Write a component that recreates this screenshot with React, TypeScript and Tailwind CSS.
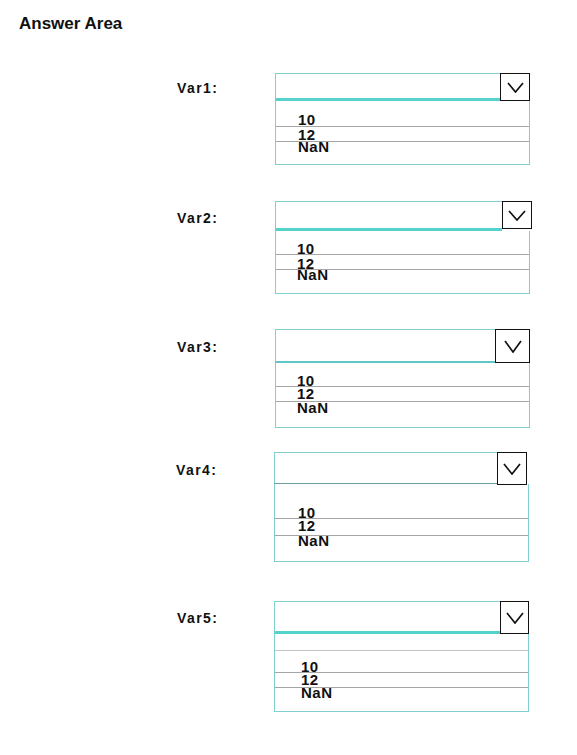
import React from "react";

type RowSpec = { h: string; pt: string; text?: string; line?: string };

type BlockSpec = {
  label: string;
  mt: string;
  labelBox: string;
  left: string;
  arrow: string;
  chev: { w: number; h: number };
  rows: RowSpec[];
  pl: string;
};

const blocks: BlockSpec[] = [
  {
    label: "Var1:",
    mt: "mt-[43px]",
    labelBox: "ml-[177px] w-[98px] pt-[10px]",
    left: "h-[28px] border-t border-l border-b-[3px] border-[#7fd0d0] border-b-[#55d2cc]",
    arrow: "w-[30px] h-[28px]",
    chev: { w: 17, h: 11 },
    pl: "pl-[22px]",
    rows: [
      { h: "h-[26px]", pt: "pt-[14px]", text: "10", line: "border-b border-[#a5a5a5]" },
      { h: "h-[15px]", pt: "pt-[3px]", text: "12", line: "border-b border-[#a5a5a5]" },
      { h: "h-[22px]", pt: "pt-0", text: "NaN" },
    ],
  },
  {
    label: "Var2:",
    mt: "mt-[36px]",
    labelBox: "ml-[177px] w-[98px] pt-[12px]",
    left: "h-[30px] border-t border-l border-b-[3px] border-[#7fd0d0] border-b-[#55d2cc]",
    arrow: "w-[30px] h-[28px] -mr-[2px]",
    chev: { w: 18, h: 11 },
    pl: "pl-[21px]",
    rows: [
      { h: "h-[24px]", pt: "pt-[13px]", text: "10", line: "border-b border-[#a5a5a5]" },
      { h: "h-[15px]", pt: "pt-[4px]", text: "12", line: "border-b border-[#a5a5a5]" },
      { h: "h-[23px]", pt: "pt-0", text: "NaN" },
    ],
  },
  {
    label: "Var3:",
    mt: "mt-[35px]",
    labelBox: "ml-[177px] w-[98px] pt-[13px]",
    left: "h-[34px] border-t border-l border-b-2 border-[#7fd0d0] border-b-[#62c6c6]",
    arrow: "w-[35px] h-[34px]",
    chev: { w: 18, h: 13 },
    pl: "pl-[21px]",
    rows: [
      { h: "h-[24px]", pt: "pt-[13px]", text: "10", line: "border-b border-[#a5a5a5]" },
      { h: "h-[15px]", pt: "pt-[2px]", text: "12", line: "border-b border-[#a5a5a5]" },
      { h: "h-[25px]", pt: "pt-[1px]", text: "NaN" },
    ],
  },
  {
    label: "Var4:",
    mt: "mt-[24px]",
    labelBox: "ml-[176px] w-[98px] pt-[13px]",
    left: "h-[32px] border-t border-l border-b border-[#7fd0d0] border-b-[#6f9e9e]",
    arrow: "w-[30px] h-[33px] mr-[2px] -mb-[1px]",
    chev: { w: 18, h: 12 },
    pl: "pl-[23px]",
    rows: [
      { h: "h-[35px]", pt: "pt-[24px]", text: "10", line: "border-b border-[#a5a5a5]" },
      { h: "h-[17px]", pt: "pt-[2px]", text: "12", line: "border-b border-[#a5a5a5]" },
      { h: "h-[25px]", pt: "pt-0", text: "NaN" },
    ],
  },
  {
    label: "Var5:",
    mt: "mt-[39px]",
    labelBox: "ml-[177px] w-[97px] pt-[12px]",
    left: "h-[33px] border-t border-l border-b-[3px] border-[#7fd0d0] border-b-[#55d2cc]",
    arrow: "w-[29px] h-[33px]",
    chev: { w: 18, h: 12 },
    pl: "pl-[26px]",
    rows: [
      { h: "h-[17px]", pt: "pt-0", line: "border-b border-[#c4c4c4]" },
      { h: "h-[22px]", pt: "pt-[11px]", text: "10", line: "border-b border-[#a5a5a5]" },
      { h: "h-[15px]", pt: "pt-[2px]", text: "12", line: "border-b border-[#a5a5a5]" },
      { h: "h-[23px]", pt: "pt-0", text: "NaN" },
    ],
  },
];

function Chevron({ w, h }: { w: number; h: number }) {
  return (
    <svg width={w} height={h} viewBox={`0 0 ${w} ${h}`} fill="none">
      <polyline
        points={`1,1 ${w / 2},${h - 1} ${w - 1},1`}
        stroke="#111"
        strokeWidth="1.7"
        strokeLinejoin="miter"
      />
    </svg>
  );
}

function Block({ b }: { b: BlockSpec }) {
  return (
    <div className={`flex ${b.mt}`}>
      <div className={`${b.labelBox} shrink-0 text-[14px] leading-[10px] font-bold tracking-[1.4px] text-[#111]`}>
        {b.label}
      </div>
      <div className="w-[255px] shrink-0">
        <div className="flex items-start">
          <div className={`flex-1 ${b.left}`} />
          <div className={`${b.arrow} shrink-0 border border-[#111] bg-white flex items-center justify-center`}>
            <Chevron w={b.chev.w} h={b.chev.h} />
          </div>
        </div>
        <div className="border-x border-b border-[#7fd0d0]">
          {b.rows.map((r, i) => (
            <div key={i} className={`${r.h} ${r.pt} ${r.line ?? ""} ${b.pl}`}>
              {r.text && (
                <div className="text-[15px] leading-[10px] font-bold tracking-[0.5px] text-[#111]">
                  {r.text}
                </div>
              )}
            </div>
          ))}
        </div>
      </div>
    </div>
  );
}

export default function App() {
  return (
    <div
      className="w-[577px] h-[755px] bg-white overflow-hidden"
      style={{ fontFamily: '"Liberation Sans", Arial, sans-serif' }}
    >
      <div className="pt-[18px] pl-[19px] text-[17px] leading-[12px] font-bold text-[#111]">
        Answer Area
      </div>
      {blocks.map((b, i) => (
        <Block key={i} b={b} />
      ))}
    </div>
  );
}
